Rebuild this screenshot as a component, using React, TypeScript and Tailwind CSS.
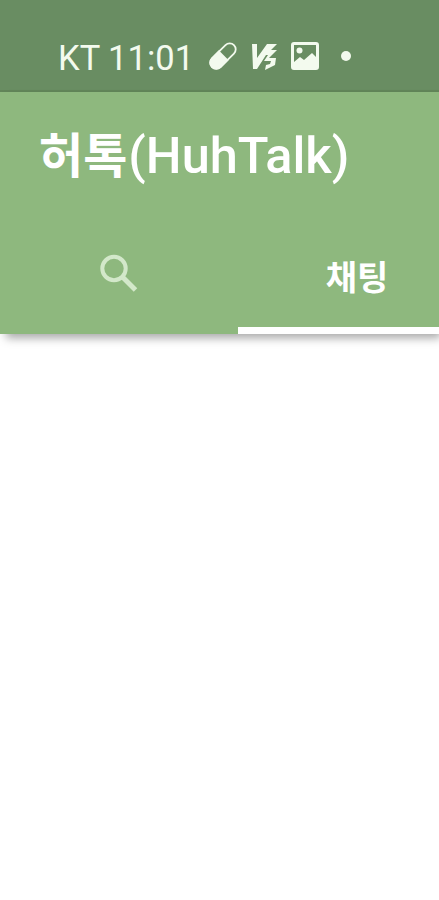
function StatusBar() {
  return (
    <header className="flex h-[92px] items-end border-b-2 border-[#628559] bg-[#698d62] pb-[10px] pl-[58px] text-[#f3faee]">
      <span className="mb-px w-[151px] whitespace-nowrap text-[34.5px] leading-[41px]">KT 11:01</span>
      <svg className="mb-[10px] h-[28px] w-[28px]" viewBox="0 0 28 28" aria-hidden="true">
        <g transform="rotate(-45 14 14)">
          <rect x="-1.5" y="8" width="31" height="12" rx="6" fill="none" stroke="currentColor" strokeWidth="1.8" />
          <path d="M15 7H4.500a7 7 0 0 0 0 14H15Z" fill="currentColor" />
        </g>
      </svg>
      <svg className="mb-[10px] ml-[15px] h-[26px] w-[26px]" viewBox="0 0 26 26" aria-hidden="true">
        <path d="M0 0h5v14L15 0h10l-6 6h6l-8 8h7l-1 7-10 5 1-5 4-1 1-3h-7l4-6h-2L5 25H1Z" fill="currentColor" />
      </svg>
      <svg className="mb-[10px] ml-[13px] h-[28px] w-[28px]" viewBox="0 0 28 28" aria-hidden="true">
        <path fillRule="evenodd" d="M3 0h22a3 3 0 0 1 3 3v22a3 3 0 0 1-3 3H3a3 3 0 0 1-3-3V3a3 3 0 0 1 3-3Zm0 3v17l6-5 4 3 8-7 4 4V3Z" fill="currentColor" />
        <circle cx="8.500" cy="8.500" r="3" fill="currentColor" />
      </svg>
      <span className="mb-[19px] ml-[22px] h-[10px] w-[10px] rounded-full bg-current" />
    </header>
  );
}

export default function App() {
  return (
    <main className="h-[900px] w-[439px] overflow-hidden bg-white font-['Roboto','Noto_Sans_CJK_KR',sans-serif]">
      <StatusBar />
      <section className="h-[242px] bg-[#8eb87e] text-white shadow-[4px_6px_9px_-2px_rgba(0,0,0,0.35)]">
        <h1 className="flex h-[126px] items-baseline pt-[34px] pl-[39px] text-[50.5px] font-medium leading-[60px] whitespace-nowrap">
          <span className="text-[48px] font-bold">허톡</span>
          <span className="ml-[1px]">(HuhTalk)</span>
        </h1>
        <nav className="flex h-[116px]">
          <button className="flex w-[238px] shrink-0 justify-center pt-[36px]" aria-label="Search">
            <svg className="h-[38px] w-[38px] text-[#d3e8ca]" viewBox="0 0 38 38" fill="none" stroke="currentColor" aria-hidden="true">
              <circle cx="14" cy="14.500" r="11.700" strokeWidth="4" />
              <path d="m22.500 23 13 13" strokeWidth="5" />
            </svg>
          </button>
          <button className="w-[238px] shrink-0 border-b-[7px] border-white pt-[10px] text-[34px] font-bold leading-[40px]">
            채팅
          </button>
        </nav>
      </section>
    </main>
  );
}
